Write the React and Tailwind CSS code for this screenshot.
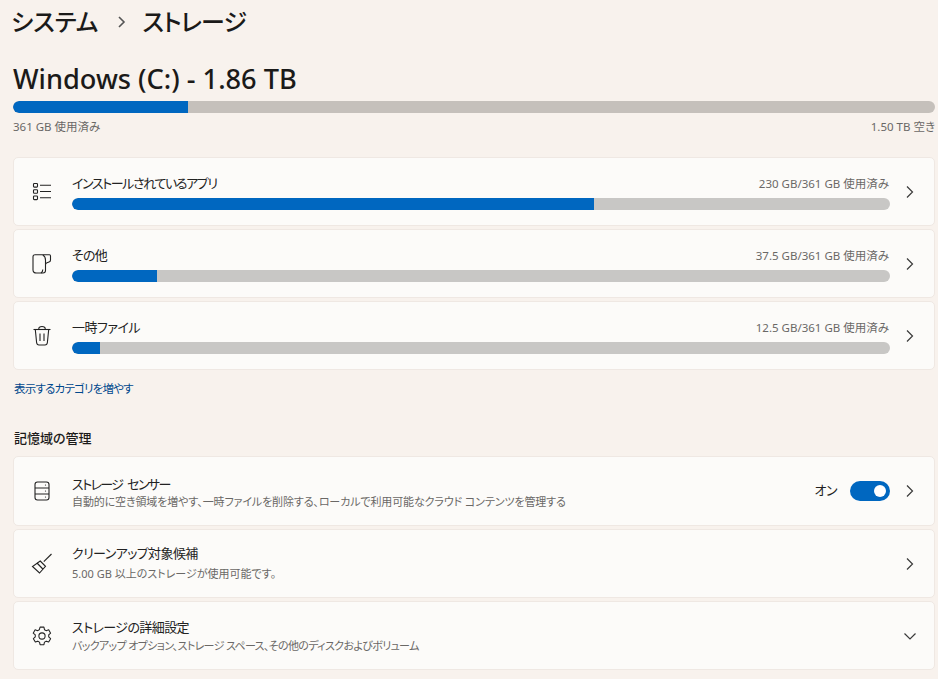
import React from 'react';

const Chevron = () => (
    <svg width="10" height="14" viewBox="0 0 10 14" fill="none" stroke="#3a3a3a" strokeWidth="1.2" className="shrink-0">
        <path d="M2 1.5 L7.5 7 L2 12.5" />
    </svg>
);

const ChevronDown = () => (
    <svg width="14" height="10" viewBox="0 0 14 10" fill="none" stroke="#3a3a3a" strokeWidth="1.2" className="shrink-0">
        <path d="M1.5 2.5 L7 8 L12.5 2.5" />
    </svg>
);

const ListIcon = () => (
    <svg width="20" height="20" viewBox="0 0 20 20" fill="none" stroke="#222" strokeWidth="1.1">
        <rect x="1.5" y="1.5" width="4" height="3.6" rx="0.8" />
        <rect x="1.5" y="7.7" width="4" height="3.6" rx="0.8" />
        <rect x="1.5" y="14" width="4" height="3.6" rx="0.8" />
        <path d="M8 3.2 H19 M8 9.5 H19 M8 15.8 H19" />
    </svg>
);

const FileIcon = () => (
    <svg width="20" height="20" viewBox="0 0 20 20" fill="none" stroke="#222" strokeWidth="1.1">
        <path d="M3 0.8 H17.5 Q18.5 0.8 18.5 2 V6 Q18.5 7.6 17 8 L15 8.8 Q13.5 9.4 13.5 10.5 V16.5 Q13.5 19 11 19 H4.5 Q1 19 1 16 V2.8 Q1 0.8 3 0.8 Z" />
        <path d="M10.8 1 Q13.5 2.5 13.5 6 V10.5" />
        <path d="M9 19 Q10.8 18 10.8 15.5" />
    </svg>
);

const TrashIcon = () => (
    <svg width="20" height="22" viewBox="0 0 20 22" fill="none" stroke="#222" strokeWidth="1.1">
        <path d="M1.5 4.5 H18.5" />
        <path d="M6.8 4.5 V3.6 Q6.8 1.5 10 1.5 Q13.2 1.5 13.2 3.6 V4.5" />
        <path d="M3.3 4.5 L4.6 17.5 Q4.9 20 7 20 H13 Q15.1 20 15.4 17.5 L16.7 4.5" />
        <path d="M8 8.5 V16 M12 8.5 V16" />
    </svg>
);

const DriveIcon = () => (
    <svg width="16" height="20" viewBox="0 0 16 20" fill="none" stroke="#222" strokeWidth="1.1">
        <rect x="1" y="1" width="14" height="18" rx="2.5" />
        <path d="M1 7 H15 M1 13 H15" />
        <circle cx="11.5" cy="16" r="0.6" fill="#222" stroke="none" />
        <circle cx="11.5" cy="10" r="0.6" fill="#222" stroke="none" />
        <circle cx="11.5" cy="4" r="0.6" fill="#222" stroke="none" />
    </svg>
);

const BroomIcon = () => (
    <svg width="22" height="22" viewBox="0 0 22 22" fill="none" stroke="#222" strokeWidth="1.1">
        <path d="M20.5 1 L12.8 8.7" />
        <path d="M9.2 8 L14.5 13.3 L8.5 20 L1.5 13.5 Z" />
        <path d="M6 10 L11.8 16" />
    </svg>
);

const GearIcon = () => (
    <svg width="22" height="22" viewBox="0 0 24 24" fill="none" stroke="#222" strokeWidth="1.15" strokeLinejoin="round">
        <path d="M9.9 2.3 h4.2 l.6 2.8 a7.5 7.5 0 0 1 1.9 1.1 l2.7-.9 2.1 3.6-2.1 1.9 a7.5 7.5 0 0 1 0 2.2 l2.1 1.9-2.1 3.6-2.7-.9 a7.5 7.5 0 0 1-1.9 1.1 l-.6 2.8 h-4.2 l-.6-2.8 a7.5 7.5 0 0 1-1.9-1.1 l-2.7.9-2.1-3.6 2.1-1.9 a7.5 7.5 0 0 1 0-2.2 L2.4 8.9 l2.1-3.6 2.7.9 a7.5 7.5 0 0 1 1.9-1.1 Z" />
        <circle cx="12" cy="12" r="3.4" />
    </svg>
);

const Card = ({ icon, className = '', children, right }) => (
    <div className={`flex items-center bg-[#fcfbf9] border border-[#efe8e3] rounded-[5px] ${className}`}>
        <div className="w-[56px] mr-[2px] shrink-0 flex justify-center">{icon}</div>
        <div className="flex-1 min-w-0">{children}</div>
        <div className="w-[40px] mr-[4px] shrink-0 flex justify-center">{right || <Chevron />}</div>
    </div>
);

const UsageCard = ({ icon, label, value, percent, track }) => (
    <Card icon={icon} className="h-[69px]">
        <div className="flex justify-between items-center h-[20px] pr-[1px]">
            <span className={`text-[13px] text-[#222] ${track}`}>{label}</span>
            <span className="text-[11.5px] text-[#6a6866]">{value}</span>
        </div>
        <div className="h-[12px] mt-[4px] rounded-full bg-[#c8c7c5] overflow-hidden">
            <div className="h-full bg-[#0067c0] rounded-l-full" style={{ width: `${percent}%` }} />
        </div>
    </Card>
);

const SettingCard = ({ icon, title, sub, right, extra, titleClass, subClass, className = 'h-[69px]' }) => (
    <Card icon={icon} right={right} className={className}>
        <div className="flex items-center justify-between">
            <div>
                <div className={`text-[13px] text-[#222] ${titleClass}`}>{title}</div>
                <div className={`text-[11px] leading-[15px] text-[#6a6866] ${subClass}`}>{sub}</div>
            </div>
            {extra}
        </div>
    </Card>
);

const Toggle = () => (
    <div className="flex items-center gap-[13px]">
        <span className="text-[13px] text-[#222] tracking-[-0.5px]">オン</span>
        <div className="w-[40px] h-[20px] rounded-full bg-[#0067c0] flex items-center justify-end pr-[4px]">
            <div className="w-[12px] h-[12px] rounded-full bg-white" />
        </div>
    </div>
);

export default function App() {
    return (
        <div className="w-[938px] h-[679px] overflow-hidden bg-[#f8f2ed] pl-[13px] pr-[3px]">
            <div className="font-['Noto_Sans','Noto_Sans_CJK_JP',sans-serif] [font-feature-settings:'palt']">
                <div className="flex items-center h-[43px] -ml-[2px] text-[24px] font-medium text-[#1b1a19]">
                    <span>システム</span>
                    <svg width="10" height="14" viewBox="0 0 10 14" fill="none" stroke="#555" strokeWidth="1.6" className="ml-[19px] mr-[15px]">
                        <path d="M2 2 L7 7 L2 12" />
                    </svg>
                    <span className="tracking-[-0.8px]">ストレージ</span>
                </div>

                <div className="mt-[18px] h-[36px] flex items-center text-[27.2px] font-medium text-[#1b1a19]">
                    Windows (C:) - 1.86 TB
                </div>
                <div className="mt-[4px] h-[12px] rounded-full bg-[#c5c0bb] overflow-hidden">
                    <div className="h-full w-[175px] bg-[#0067c0] rounded-l-full" />
                </div>
                <div className="flex justify-between h-[18px] mt-[5px] text-[11.5px] text-[#6a6866]">
                    <span>361 GB 使用済み</span>
                    <span>1.50 TB 空き</span>
                </div>

                <div className="mt-[21px] flex flex-col gap-[3px]">
                    <UsageCard icon={<ListIcon />} label="インストールされているアプリ" value="230 GB/361 GB 使用済み" percent={63.8} track="tracking-[-1.4px]" />
                    <UsageCard icon={<FileIcon />} label="その他" value="37.5 GB/361 GB 使用済み" percent={10.4} track="tracking-[-0.8px]" />
                    <UsageCard icon={<TrashIcon />} label="一時ファイル" value="12.5 GB/361 GB 使用済み" percent={3.4} track="tracking-[-0.5px]" />
                </div>

                <div className="mt-[10px] ml-[1px] h-[18px] flex items-center text-[11.5px] text-[#00488c] tracking-[-0.8px]">
                    表示するカテゴリを増やす
                </div>

                <div className="mt-[31px] ml-[1px] h-[20px] flex items-center text-[13px] font-medium text-[#1b1a19]">
                    記憶域の管理
                </div>

                <div className="mt-[7px] flex flex-col gap-[3px]">
                    <SettingCard
                        icon={<DriveIcon />}
                        title="ストレージ センサー"
                        sub="自動的に空き領域を増やす、一時ファイルを削除する、ローカルで利用可能なクラウド コンテンツを管理する"
                        className="h-[70px]"
                        titleClass="leading-[19px] pt-[1px] tracking-[-1.6px] [word-spacing:3px]"
                        subClass="tracking-[-0.12px]"
                        extra={<Toggle />}
                    />
                    <SettingCard
                        icon={<BroomIcon />}
                        title="クリーンアップ対象候補"
                        sub="5.00 GB 以上のストレージが使用可能です。"
                        titleClass="leading-[19px] pb-[3px] tracking-[-0.6px]"
                        subClass="mb-[3px]"
                    />
                    <SettingCard
                        icon={<GearIcon />}
                        title="ストレージの詳細設定"
                        sub="バックアップ オプション、ストレージ スペース、その他のディスクおよびボリューム"
                        titleClass="leading-[19px] pb-[1px] tracking-[-0.6px]"
                        subClass="mb-[1px] tracking-[-0.65px]"
                        right={<ChevronDown />}
                    />
                </div>
            </div>
        </div>
    );
}
